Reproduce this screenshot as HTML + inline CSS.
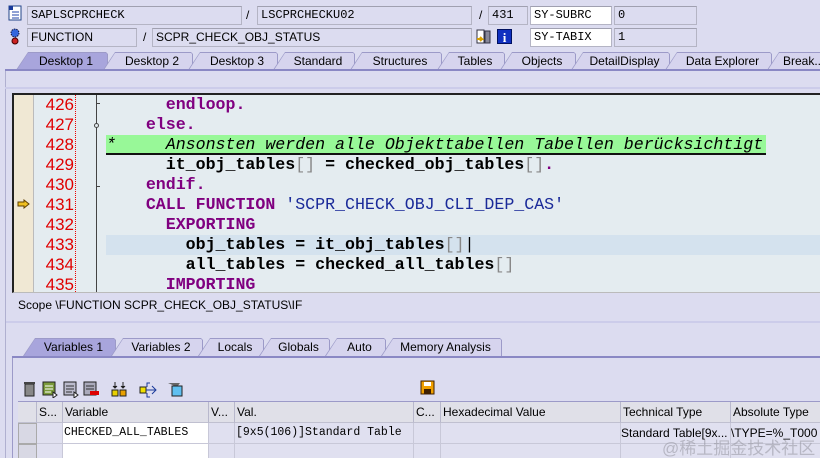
<!DOCTYPE html>
<html><head><meta charset="utf-8"><style>
*{margin:0;padding:0;box-sizing:border-box}
html,body{width:820px;height:458px;overflow:hidden}
body{background:#dcdcf0;font-family:"Liberation Sans","DejaVu Sans",sans-serif;font-size:12px;color:#000;position:relative}
.a{position:absolute}
.f{position:absolute;height:19px;background:#dcdcf0;border:1px solid #b4b4c4;border-top-color:#a0a0b0;font-family:"Liberation Mono",monospace;font-size:12px;line-height:17px;padding-left:3px}
.fs{font-family:"Liberation Sans",sans-serif}
.w{background:#fff}
.sl{position:absolute;font-size:12px}
.tab{position:absolute;height:18px;background:#9c9ac8;clip-path:polygon(12px 0,calc(100% - 2px) 0,100% 2px,100% 100%,0 100%);font-size:12px;line-height:19px;text-align:center;color:#000;padding-left:8px}
.tab::before{content:"";position:absolute;left:1px;top:1px;right:1px;bottom:0;background:#d6d4ee;clip-path:polygon(11px 0,calc(100% - 1px) 0,100% 1px,100% 100%,0 100%);z-index:-1}
.tab span{position:relative}
.tab.act::before{background:#a8a5dc}
.tab{z-index:1}
.code{position:absolute;left:106px;font-family:"Liberation Mono",monospace;font-size:16.6px;line-height:20px;white-space:pre;font-weight:bold}
.k{color:#800080}.s{color:#1a2a99;font-weight:normal}.g{color:#888;font-weight:normal}
.ln{position:absolute;left:34px;width:40px;text-align:right;color:#e00000;font-family:"Liberation Sans",sans-serif;font-size:17px;line-height:20px}
.th{position:absolute;top:402px;height:21px;background:#e0e0e8;border-right:1px solid #b8b8cc;border-bottom:1px solid #c0c0d0;line-height:20px;padding-left:2px;font-size:12px;overflow:hidden;white-space:nowrap}
.td{position:absolute;height:21px;border-right:1px solid #c8c8d8;border-bottom:1px solid #c8c8d8;line-height:20px;padding-left:1px;font-size:12px;overflow:hidden;white-space:nowrap}
</style></head><body>
<svg class="a" style="left:8px;top:5px" width="14" height="16"><rect x="1" y="1" width="12" height="14" fill="#fff" stroke="#224488"/><rect x="1" y="1" width="4" height="4" fill="#1a3a9a"/><path d="M4 7h7M4 10h7M4 13h7" stroke="#2244aa"/></svg>
<div class="f" style="left:27px;top:6px;width:215px">SAPLSCPRCHECK</div>
<div class="sl" style="left:246px;top:8px">/</div>
<div class="f" style="left:257px;top:6px;width:215px">LSCPRCHECKU02</div>
<div class="sl" style="left:479px;top:8px">/</div>
<div class="f" style="left:488px;top:6px;width:40px">431</div>
<div class="f w" style="left:530px;top:6px;width:82px">SY-SUBRC</div>
<div class="f" style="left:614px;top:6px;width:83px">0</div>
<svg class="a" style="left:9px;top:28px" width="12" height="17"><circle cx="6" cy="5" r="4" fill="#3366dd" stroke="#113" stroke-dasharray="1.5 1"/><circle cx="6" cy="13" r="3" fill="#cc2222" stroke="#400"/></svg>
<div class="f fs" style="left:27px;top:28px;width:110px">FUNCTION</div>
<div class="sl" style="left:143px;top:30px">/</div>
<div class="f fs" style="left:152px;top:28px;width:320px">SCPR_CHECK_OBJ_STATUS</div>
<svg class="a" style="left:476px;top:29px" width="16" height="16"><rect x="1" y="1" width="7" height="13" fill="#fff" stroke="#334"/><rect x="9" y="2" width="5" height="12" fill="#889" stroke="#334"/><path d="M1 10h5l-2-2M6 10l-2 2" stroke="#d8a000" stroke-width="2" fill="none"/></svg>
<svg class="a" style="left:497px;top:29px" width="15" height="15"><rect x="0.5" y="0.5" width="14" height="14" fill="#1030c0" stroke="#001060"/><text x="7.5" y="13" font-family="Liberation Serif" font-weight="bold" font-size="13" fill="#fff" text-anchor="middle">i</text></svg>
<div class="f w" style="left:530px;top:28px;width:82px">SY-TABIX</div>
<div class="f" style="left:614px;top:28px;width:83px">1</div>
<!-- tabs -->
<div class="tab act" style="left:16px;top:52px;width:92px"><span>Desktop 1</span></div>
<div class="tab" style="left:103px;top:52px;width:90px"><span>Desktop 2</span></div>
<div class="tab" style="left:188px;top:52px;width:90px"><span>Desktop 3</span></div>
<div class="tab" style="left:273px;top:52px;width:82px"><span>Standard</span></div>
<div class="tab" style="left:350px;top:52px;width:92px"><span>Structures</span></div>
<div class="tab" style="left:437px;top:52px;width:68px"><span>Tables</span></div>
<div class="tab" style="left:500px;top:52px;width:76px"><span>Objects</span></div>
<div class="tab" style="left:571px;top:52px;width:99px"><span>DetailDisplay</span></div>
<div class="tab" style="left:665px;top:52px;width:107px"><span>Data Explorer</span></div>
<div class="tab" style="left:767px;top:52px;width:66px;text-align:left;padding-left:16px"><span>Break..</span></div>
<div class="a" style="left:5px;top:69px;width:815px;height:2px;background:#8a88c4;z-index:2"></div>
<div class="a" style="left:5px;top:71px;width:1px;height:387px;background:#b0b0d0"></div>
<div class="a" style="left:5px;top:87px;width:815px;height:2px;background:#ccccea"></div>
<!-- editor -->
<div class="a" style="left:12px;top:93px;width:808px;height:200px;background:#e4ecf0;border-top:2px solid #222;border-left:2px solid #222;border-bottom:1px solid #bbb"></div>
<div class="a" style="left:14px;top:95px;width:20px;height:197px;background:#f0e8d4;border-right:1px solid #bbb"></div>
<div class="a" style="left:75px;top:95px;width:0;height:197px;border-left:1px dotted #e00"></div>
<div class="a" style="left:96px;top:95px;width:1px;height:197px;background:#444"></div>
<div class="a" style="left:97px;top:103px;width:3px;height:1px;background:#444"></div>
<div class="a" style="left:94px;top:123px;width:5px;height:5px;border:1px solid #444;border-radius:50%;background:#e4ecf0"></div>
<div class="a" style="left:97px;top:186px;width:3px;height:1px;background:#444"></div>
<div class="a" style="left:106px;top:135px;width:660px;height:20px;background:#98f898;border-bottom:2px solid #111"></div>
<div class="a" style="left:106px;top:235px;width:714px;height:20px;background:#d4e2ee"></div>
<svg class="a" style="left:17px;top:199px" width="13" height="10"><path d="M1 3h6V1l5 4-5 4V7H1z" fill="#f0c020" stroke="#604000"/></svg>
<div class="ln" style="top:95px">426<br>427<br>428<br>429<br>430<br>431<br>432<br>433<br>434<br>435</div>
<div class="code" style="top:95px"><span class="k">      endloop.</span>
<span class="k">    else.</span>
<span style="font-weight:normal;font-style:italic">*     Ansonsten werden alle Objekttabellen Tabellen berücksichtigt</span>
      it_obj_tables<span class="g">[]</span> = checked_obj_tables<span class="g">[]</span><span class="k">.</span>
<span class="k">    endif.</span>
<span class="k">    CALL FUNCTION</span> <span class="s">'SCPR_CHECK_OBJ_CLI_DEP_CAS'</span>
<span class="k">      EXPORTING</span>
        obj_tables = it_obj_tables<span class="g">[]</span><span style="font-weight:normal">|</span>
        all_tables = checked_all_tables<span class="g">[]</span>
<span class="k">      IMPORTING</span></div>
<div class="sl" style="left:18px;top:298px">Scope \FUNCTION SCPR_CHECK_OBJ_STATUS\IF</div>
<div class="a" style="left:6px;top:321px;width:814px;height:2px;background:#ccccea"></div>
<!-- lower tabs -->
<div class="tab act" style="left:23px;top:338px;width:93px"><span>Variables 1</span></div>
<div class="tab" style="left:111px;top:338px;width:92px"><span>Variables 2</span></div>
<div class="tab" style="left:198px;top:338px;width:66px"><span>Locals</span></div>
<div class="tab" style="left:259px;top:338px;width:71px"><span>Globals</span></div>
<div class="tab" style="left:325px;top:338px;width:61px"><span>Auto</span></div>
<div class="tab" style="left:381px;top:338px;width:121px"><span>Memory Analysis</span></div>
<div class="a" style="left:12px;top:356px;width:808px;height:2px;background:#8a88c4;z-index:2"></div>
<div class="a" style="left:12px;top:358px;width:1px;height:100px;background:#9c9ac8"></div>
<!-- toolbar -->
<svg class="a" style="left:22px;top:380px" width="170" height="18">
<rect x="3" y="4" width="9" height="12" fill="#888" stroke="#222"/><rect x="2" y="2" width="11" height="2" fill="#444"/>
<rect x="21" y="2" width="12" height="13" fill="#7a9a3a" stroke="#222"/><path d="M23 6h8M23 9h8M23 12h6" stroke="#fff"/><path d="M31 12l4 3-4 3z" fill="#fff" stroke="#222"/>
<rect x="42" y="2" width="12" height="13" fill="#bbc" stroke="#222"/><path d="M44 6h8M44 9h8M44 12h6" stroke="#333"/><path d="M52 12l4 3-4 3z" fill="#fff" stroke="#222"/>
<rect x="62" y="2" width="12" height="13" fill="#aab" stroke="#222"/><path d="M64 6h8M64 9h8" stroke="#333"/><rect x="68" y="11" width="9" height="4" fill="#dd0000"/>
<rect x="90" y="10" width="6" height="6" fill="#e8d000" stroke="#222"/><rect x="98" y="10" width="6" height="6" fill="#e8a000" stroke="#222"/><path d="M93 2v6M91 6l2 2 2-2M101 2v6M99 6l2 2 2-2" stroke="#222"/>
<rect x="118" y="7" width="6" height="6" fill="#f0e000" stroke="#222"/><path d="M124 10h10M130 6l4 4-4 4M128 3h-3v4M128 17h-3v-4" stroke="#1a3a9a" fill="none"/>
<path d="M146 3h12l-3 4z" fill="#666"/><rect x="150" y="6" width="10" height="10" fill="#60c0f0" stroke="#222"/>
</svg>
<svg class="a" style="left:420px;top:380px" width="15" height="15"><rect x="1" y="1" width="13" height="13" fill="#f0a000" stroke="#402000"/><rect x="4" y="2" width="7" height="4" fill="#fff"/><rect x="4" y="9" width="7" height="5" fill="#402000"/></svg>
<!-- table -->
<div class="a" style="left:18px;top:401px;width:802px;height:1px;background:#9c9ac8"></div>
<div class="a" style="left:18px;top:402px;width:802px;height:56px;background:#e0e0f0"></div>
<div class="th" style="left:18px;width:19px"></div>
<div class="th" style="left:37px;width:26px">S...</div>
<div class="th" style="left:63px;width:146px">Variable</div>
<div class="th" style="left:209px;width:26px">V...</div>
<div class="th" style="left:235px;width:179px">Val.</div>
<div class="th" style="left:414px;width:27px">C...</div>
<div class="th" style="left:441px;width:180px">Hexadecimal Value</div>
<div class="th" style="left:621px;width:110px">Technical Type</div>
<div class="th" style="left:731px;width:100px">Absolute Type</div>
<div class="td" style="left:18px;top:423px;width:19px;background:#d8d8e4;border:1px solid #aaa"></div>
<div class="td" style="left:37px;top:423px;width:26px"></div>
<div class="td" style="left:63px;top:423px;width:146px;background:#fff;font-family:'Liberation Mono',monospace;font-size:11.5px">CHECKED_ALL_TABLES</div>
<div class="td" style="left:209px;top:423px;width:26px"></div>
<div class="td" style="left:235px;top:423px;width:179px;font-family:'Liberation Mono',monospace;font-size:11.5px">[9x5(106)]Standard Table</div>
<div class="td" style="left:414px;top:423px;width:27px"></div>
<div class="td" style="left:441px;top:423px;width:180px"></div>
<div class="td" style="left:621px;top:423px;width:110px;padding-left:0">Standard Table[9x...</div>
<div class="td" style="left:731px;top:423px;width:100px;padding-left:0">\TYPE=%_T000</div>
<div class="td" style="left:18px;top:444px;width:19px;background:#d8d8e4;border:1px solid #aaa"></div>
<div class="td" style="left:37px;top:444px;width:26px"></div>
<div class="td" style="left:63px;top:444px;width:146px;background:#fff"></div>
<div class="td" style="left:209px;top:444px;width:26px"></div>
<div class="td" style="left:235px;top:444px;width:179px"></div>
<div class="td" style="left:414px;top:444px;width:27px"></div>
<div class="td" style="left:441px;top:444px;width:180px"></div>
<div class="td" style="left:621px;top:444px;width:110px"></div>
<div class="td" style="left:731px;top:444px;width:100px"></div>
<div class="a" style="left:662px;top:434px;font-family:'Liberation Sans','Noto Sans CJK SC',sans-serif;font-size:17px;color:rgba(150,150,160,0.55)">@稀土掘金技术社区</div>
</body></html>
